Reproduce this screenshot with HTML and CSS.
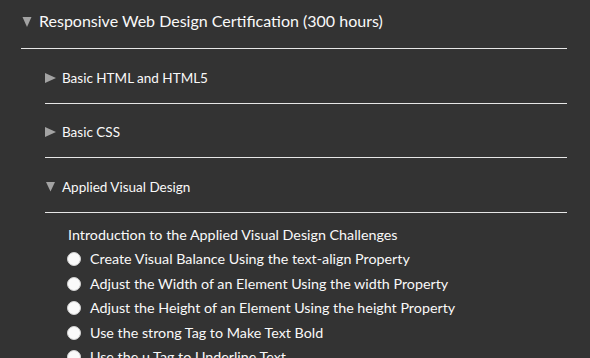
FILE: index.html
```html
<!DOCTYPE html>
<html>
<head>
  <title>Curriculum</title>
  <link rel="stylesheet" href="styles.css">
</head>
<body>
  <div class="cert">
    <div class="cert-title">
      <svg class="arrow big" width="10" height="10" viewBox="0 0 10 10"><polygon points="0.5,0 9.5,0 5,10"/></svg>
      Responsive Web Design Certification (300 hours)
    </div>
    <div class="blocks">
      <div class="block">
        <svg class="arrow" width="11" height="10" viewBox="0 0 11 10"><polygon points="0,0 11,5 0,10"/></svg>
        Basic HTML and HTML5
      </div>
      <div class="block">
        <svg class="arrow" width="11" height="10" viewBox="0 0 11 10"><polygon points="0,0 11,5 0,10"/></svg>
        Basic CSS
      </div>
      <div class="block">
        <svg class="arrow" width="11" height="10" viewBox="0 0 11 10"><polygon points="1,0 10,0 5.5,9.5"/></svg>
        Applied Visual Design
      </div>
      <div class="challenges">
        <div class="intro">Introduction to the Applied Visual Design Challenges</div>
        <ul class="challenge-list">
          <li><span class="dot"></span>Create Visual Balance Using the text-align Property</li>
          <li><span class="dot"></span>Adjust the Width of an Element Using the width Property</li>
          <li><span class="dot"></span>Adjust the Height of an Element Using the height Property</li>
          <li><span class="dot"></span>Use the strong Tag to Make Text Bold</li>
          <li><span class="dot"></span>Use the u Tag to Underline Text</li>
        </ul>
      </div>
    </div>
  </div>
</body>
</html>
```

FILE: styles.css
```css
html, body {
  margin: 0;
  height: 100%;
  overflow: hidden;
}
body {
  background: #333333;
  color: #f9f9f9;
  font-family: Lato, "Open Sans", sans-serif;
}
.cert {
  margin-left: 21px;
  width: 546px;
  padding-top: 11px;
}
.cert-title {
  font-size: 16px;
  line-height: 20px;
  padding-bottom: 17px;
  border-bottom: 1px solid #e6e6e6;
  display: flex;
  align-items: center;
}
.arrow {
  fill: #a3a3a3;
  flex: none;
  margin-right: 6px;
}
.arrow.big {
  margin: 1px 7px 0 1px;
}
.blocks {
  margin-left: 24px;
}
.block {
  font-size: 13.5px;
  line-height: 20px;
  padding: 18.5px 0 15px;
  border-bottom: 1px solid #e6e6e6;
  display: flex;
  align-items: center;
}
.challenges {
  padding: 10px 0 0 23px;
  font-size: 14.3px;
  line-height: 24.5px;
}
.challenge-list {
  list-style: none;
  margin: 0;
  padding: 0;
}
.challenge-list li {
  display: flex;
  align-items: center;
}
.dot {
  width: 12px;
  height: 12px;
  border-radius: 50%;
  background: #fafafa;
  border: 1px solid #d0d0d0;
  margin: 0 9px 0 -1px;
  flex: none;
}
```
